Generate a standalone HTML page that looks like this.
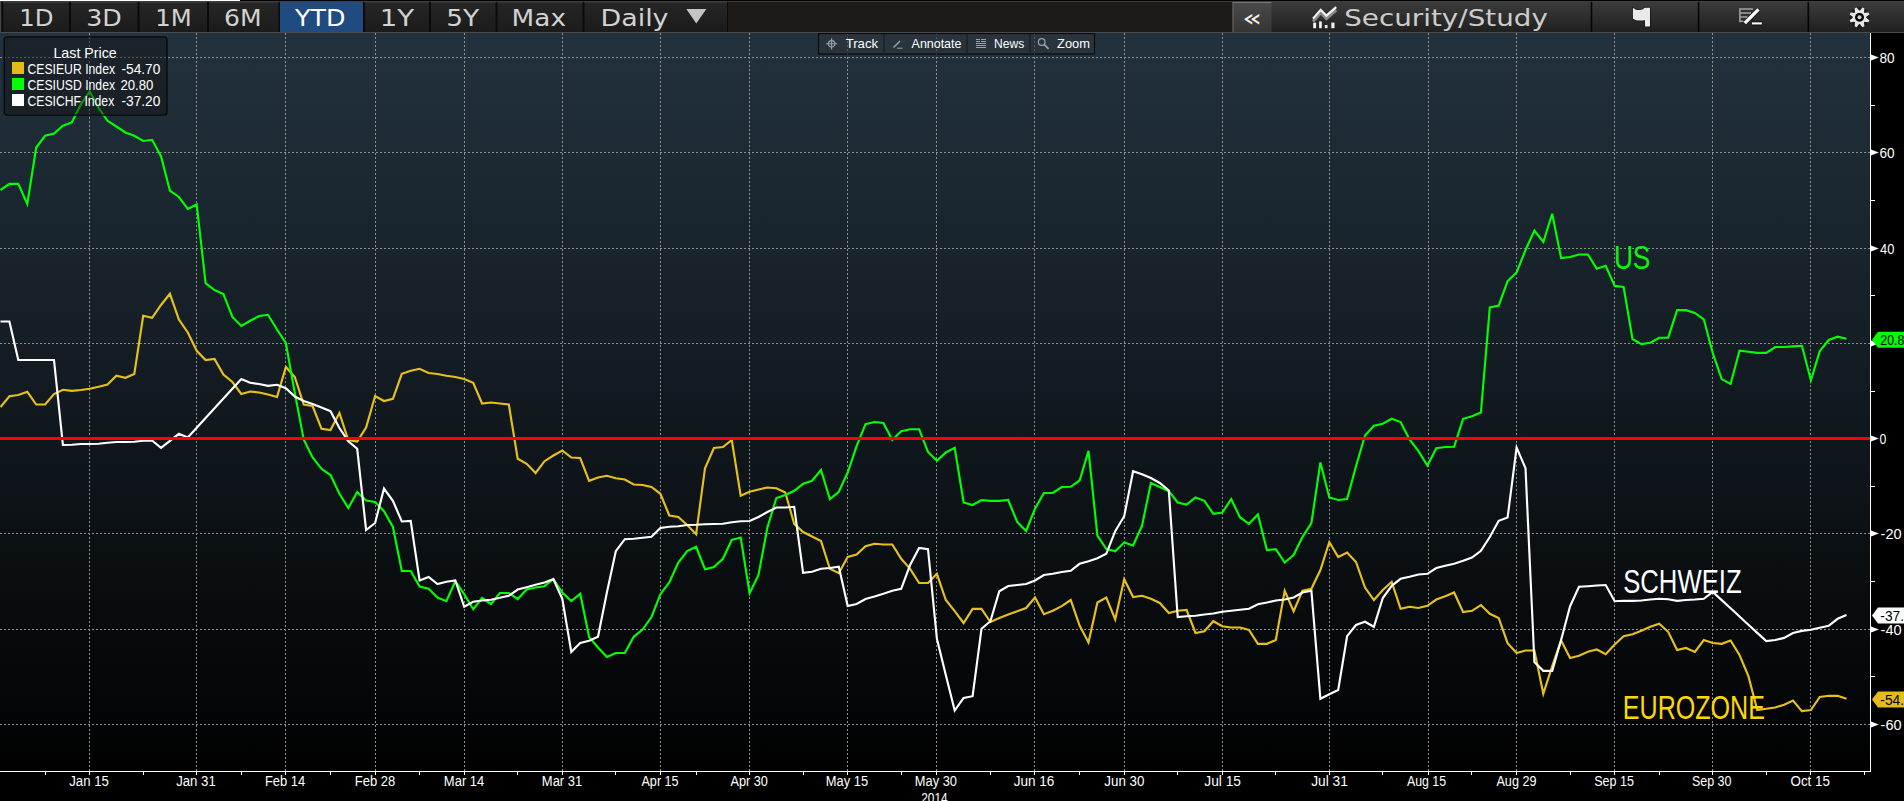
<!DOCTYPE html>
<html lang="en"><head><meta charset="utf-8"><title>CESI Chart</title>
<style>
html,body{margin:0;padding:0;background:#000;overflow:hidden}
svg{display:block;font-family:"Liberation Sans",sans-serif}
.g{stroke:#8e8e8e;stroke-width:1;stroke-dasharray:2 2;shape-rendering:crispEdges;fill:none}
.ax{stroke:#fff;stroke-width:1;shape-rendering:crispEdges;fill:none}
.ln{fill:none;stroke-width:2.15;stroke-linejoin:miter;stroke-linecap:butt}
</style></head><body>
<svg width="1904" height="801" viewBox="0 0 1904 801">
<defs>
<linearGradient id="bg" x1="0" y1="0" x2="0" y2="1"><stop offset="0" stop-color="#22323e"/><stop offset="1" stop-color="#010101"/></linearGradient>
<linearGradient id="tb" x1="0" y1="0" x2="0" y2="1"><stop offset="0" stop-color="#262626"/><stop offset="1" stop-color="#1b1b1b"/></linearGradient>
<linearGradient id="tr" x1="0" y1="0" x2="0" y2="1"><stop offset="0" stop-color="#3b3b3b"/><stop offset="1" stop-color="#202020"/></linearGradient>
<linearGradient id="tc" x1="0" y1="0" x2="0" y2="1"><stop offset="0" stop-color="#4a4a4a"/><stop offset="1" stop-color="#353535"/></linearGradient>
</defs>
<rect width="1904" height="801" fill="#000"/>

<rect x="0" y="33" width="1870" height="738" fill="url(#bg)"/>
<line class="g" x1="89.5" y1="33" x2="89.5" y2="771"/>
<line class="g" x1="196.5" y1="33" x2="196.5" y2="771"/>
<line class="g" x1="285.5" y1="33" x2="285.5" y2="771"/>
<line class="g" x1="375.5" y1="33" x2="375.5" y2="771"/>
<line class="g" x1="464.5" y1="33" x2="464.5" y2="771"/>
<line class="g" x1="562.5" y1="33" x2="562.5" y2="771"/>
<line class="g" x1="660.5" y1="33" x2="660.5" y2="771"/>
<line class="g" x1="749.5" y1="33" x2="749.5" y2="771"/>
<line class="g" x1="847.5" y1="33" x2="847.5" y2="771"/>
<line class="g" x1="936.5" y1="33" x2="936.5" y2="771"/>
<line class="g" x1="1034.5" y1="33" x2="1034.5" y2="771"/>
<line class="g" x1="1124.5" y1="33" x2="1124.5" y2="771"/>
<line class="g" x1="1222.5" y1="33" x2="1222.5" y2="771"/>
<line class="g" x1="1329.5" y1="33" x2="1329.5" y2="771"/>
<line class="g" x1="1428.5" y1="33" x2="1428.5" y2="771"/>
<line class="g" x1="1516.5" y1="33" x2="1516.5" y2="771"/>
<line class="g" x1="1614.5" y1="33" x2="1614.5" y2="771"/>
<line class="g" x1="1712.5" y1="33" x2="1712.5" y2="771"/>
<line class="g" x1="1810.5" y1="33" x2="1810.5" y2="771"/>
<line class="g" x1="0" y1="57.5" x2="1870" y2="57.5"/>
<line class="g" x1="0" y1="152.5" x2="1870" y2="152.5"/>
<line class="g" x1="0" y1="248.5" x2="1870" y2="248.5"/>
<line class="g" x1="0" y1="343.5" x2="1870" y2="343.5"/>
<line class="g" x1="0" y1="533.5" x2="1870" y2="533.5"/>
<line class="g" x1="0" y1="629.5" x2="1870" y2="629.5"/>
<line class="g" x1="0" y1="724.5" x2="1870" y2="724.5"/>
<polyline class="ln" stroke="#e8c118" points="0.5,407.0 9.4,396.2 18.3,395.0 27.3,391.8 36.2,404.5 45.1,404.5 54.0,394.0 62.9,389.8 71.8,390.8 80.8,390.0 89.7,388.8 98.6,386.8 107.5,384.5 116.4,375.8 125.4,377.8 134.3,374.0 143.2,315.8 152.1,317.8 161.0,305.0 169.9,293.8 178.9,319.5 187.8,332.5 196.7,350.8 205.6,360.0 214.5,359.0 223.4,374.5 232.4,382.0 241.3,394.0 250.2,391.5 259.1,392.5 268.0,394.5 277.0,397.0 285.9,367.0 294.8,377.0 303.7,404.5 312.6,406.0 321.5,428.8 330.5,430.0 339.4,413.0 348.3,440.0 357.2,441.5 366.1,427.5 375.1,396.0 384.0,401.0 392.9,398.8 401.8,373.8 410.7,370.8 419.6,368.8 428.6,373.0 437.5,374.0 446.4,375.8 455.3,377.0 464.2,379.0 473.2,382.8 482.1,403.5 491.0,402.5 499.9,403.5 508.8,404.5 517.7,458.8 526.7,463.8 535.6,473.0 544.5,461.2 553.4,455.5 562.3,450.5 571.3,457.5 580.2,458.0 589.1,480.8 598.0,477.5 606.9,475.8 615.8,478.2 624.8,479.5 633.7,484.5 642.6,485.0 651.5,487.0 660.4,493.8 669.3,515.5 678.3,517.0 687.2,525.0 696.1,534.2 705.0,468.2 713.9,448.0 722.9,447.0 731.8,440.0 740.7,495.8 749.6,491.8 758.5,489.5 767.4,487.5 776.4,488.2 785.3,492.5 794.2,523.8 803.1,532.0 812.0,536.5 821.0,541.0 829.9,568.8 838.8,573.2 847.7,557.0 856.6,554.5 865.5,546.2 874.5,543.8 883.4,544.5 892.3,544.5 901.2,558.8 910.1,568.8 919.1,583.0 928.0,583.0 936.9,573.8 945.8,600.0 954.7,611.2 963.6,623.0 972.6,608.8 981.5,608.8 990.4,622.0 999.3,618.0 1008.2,614.5 1017.2,611.2 1026.1,608.0 1035.0,597.5 1043.9,614.2 1052.8,610.8 1061.7,606.2 1070.7,600.0 1079.6,625.5 1088.5,642.5 1097.4,602.5 1106.3,597.5 1115.2,619.5 1124.2,579.2 1133.1,597.0 1142.0,595.8 1150.9,598.8 1159.8,603.0 1168.8,613.0 1177.7,610.8 1186.6,610.0 1195.5,633.0 1204.4,631.2 1213.3,621.2 1222.3,626.2 1231.2,627.5 1240.1,627.5 1249.0,630.0 1257.9,643.8 1266.9,643.8 1275.8,640.0 1284.7,590.8 1293.6,611.2 1302.5,590.8 1311.4,588.8 1320.4,570.0 1329.3,542.0 1338.2,557.0 1347.1,552.5 1356.0,562.0 1365.0,587.5 1373.9,600.0 1382.8,590.0 1391.7,582.0 1400.6,608.8 1409.5,606.8 1418.5,608.0 1427.4,605.8 1436.3,599.5 1445.2,596.2 1454.1,592.5 1463.1,612.0 1472.0,610.8 1480.9,605.0 1489.8,613.8 1498.7,618.0 1507.6,643.2 1516.6,653.0 1525.5,650.5 1534.4,650.5 1543.3,693.8 1552.2,666.2 1561.1,640.5 1570.1,658.0 1579.0,655.8 1587.9,651.8 1596.8,649.5 1605.7,654.2 1614.7,644.5 1623.6,636.2 1632.5,634.2 1641.4,630.8 1650.3,626.8 1659.2,623.8 1668.2,631.8 1677.1,650.0 1686.0,648.0 1694.9,652.0 1703.8,640.0 1712.8,643.0 1721.7,643.8 1730.6,640.5 1739.5,655.0 1748.4,676.2 1757.3,710.0 1766.3,708.8 1775.2,707.5 1784.1,704.7 1793.0,700.5 1801.9,711.1 1810.9,710.0 1819.8,696.9 1828.7,695.8 1837.6,695.8 1846.5,698.8"/>
<polyline class="ln" stroke="#00ff00" points="0.5,190.0 9.4,183.8 18.3,183.8 27.3,204.0 36.2,147.5 45.1,135.8 54.0,133.5 62.9,125.8 71.8,122.5 80.8,104.5 89.7,91.5 98.6,108.0 107.5,120.8 116.4,126.5 125.4,132.5 134.3,135.8 143.2,141.0 152.1,139.8 161.0,156.2 169.9,190.5 178.9,197.0 187.8,209.0 196.7,204.5 205.6,283.2 214.5,290.0 223.4,294.0 232.4,317.0 241.3,326.0 250.2,320.8 259.1,316.0 268.0,314.8 277.0,329.5 285.9,343.2 294.8,393.0 303.7,439.5 312.6,457.5 321.5,468.8 330.5,475.0 339.4,493.8 348.3,508.0 357.2,492.0 366.1,500.5 375.1,502.0 384.0,511.2 392.9,527.0 401.8,571.0 410.7,571.0 419.6,586.5 428.6,588.8 437.5,597.5 446.4,601.2 455.3,581.2 464.2,594.2 473.2,609.2 482.1,598.0 491.0,604.0 499.9,593.0 508.8,593.0 517.7,599.0 526.7,589.5 535.6,587.5 544.5,586.2 553.4,579.0 562.3,592.5 571.3,601.0 580.2,593.8 589.1,637.0 598.0,647.5 606.9,657.0 615.8,653.0 624.8,653.0 633.7,636.8 642.6,629.5 651.5,617.0 660.4,594.2 669.3,582.5 678.3,562.5 687.2,551.0 696.1,546.8 705.0,569.2 713.9,567.0 722.9,558.8 731.8,540.0 740.7,537.5 749.6,593.2 758.5,575.0 767.4,527.5 776.4,498.0 785.3,495.0 794.2,490.8 803.1,483.8 812.0,480.8 821.0,470.0 829.9,499.2 838.8,491.8 847.7,472.5 856.6,446.2 865.5,424.2 874.5,422.0 883.4,423.0 892.3,440.0 901.2,431.2 910.1,429.2 919.1,429.2 928.0,452.0 936.9,460.8 945.8,452.5 954.7,447.8 963.6,502.5 972.6,505.0 981.5,500.0 990.4,500.8 999.3,500.8 1008.2,500.0 1017.2,522.0 1026.1,531.0 1035.0,508.8 1043.9,493.0 1052.8,493.0 1061.7,487.0 1070.7,486.8 1079.6,480.5 1088.5,450.8 1097.4,535.5 1106.3,548.8 1115.2,551.2 1124.2,542.5 1133.1,545.5 1142.0,525.8 1150.9,483.0 1159.8,487.0 1168.8,491.2 1177.7,502.5 1186.6,504.5 1195.5,497.5 1204.4,500.8 1213.3,513.8 1222.3,512.5 1231.2,499.2 1240.1,517.5 1249.0,523.8 1257.9,514.5 1266.9,550.0 1275.8,549.2 1284.7,562.5 1293.6,555.0 1302.5,537.0 1311.4,523.0 1320.4,462.5 1329.3,497.5 1338.2,500.0 1347.1,499.0 1356.0,466.2 1365.0,435.5 1373.9,425.8 1382.8,423.8 1391.7,418.8 1400.6,422.0 1409.5,439.5 1418.5,451.2 1427.4,465.5 1436.3,448.2 1445.2,447.0 1454.1,446.8 1463.1,418.8 1472.0,416.2 1480.9,412.5 1489.8,307.5 1498.7,305.5 1507.6,281.2 1516.6,272.5 1525.5,250.0 1534.4,230.5 1543.3,242.0 1552.2,213.8 1561.1,258.0 1570.1,257.0 1579.0,254.5 1587.9,254.5 1596.8,268.8 1605.7,265.8 1614.7,285.9 1623.6,287.0 1632.5,339.0 1641.4,344.1 1650.3,342.8 1659.2,337.7 1668.2,337.7 1677.1,310.1 1686.0,310.1 1694.9,312.9 1703.8,319.3 1712.8,353.2 1721.7,379.1 1730.6,384.0 1739.5,350.7 1748.4,351.7 1757.3,352.8 1766.3,352.8 1775.2,347.0 1784.1,347.0 1793.0,346.4 1801.9,345.8 1810.9,380.4 1819.8,351.1 1828.7,340.0 1837.6,336.7 1846.5,338.8"/>
<polyline class="ln" stroke="#ffffff" points="0.5,321.5 9.4,321.5 18.3,360.0 27.3,360.0 36.2,360.0 45.1,360.0 54.0,360.0 62.9,445.0 71.8,444.8 80.8,444.0 89.7,444.0 98.6,443.8 107.5,442.8 116.4,442.0 125.4,442.0 134.3,441.8 143.2,440.8 152.1,440.5 161.0,447.8 169.9,440.8 178.9,433.8 187.8,437.5 196.7,427.8 205.6,418.0 214.5,408.2 223.4,398.5 232.4,388.8 241.3,379.0 250.2,382.8 259.1,384.0 268.0,385.8 277.0,384.8 285.9,388.2 294.8,396.5 303.7,401.0 312.6,404.0 321.5,407.5 330.5,411.2 339.4,428.0 348.3,441.2 357.2,448.8 366.1,530.0 375.1,523.0 384.0,488.5 392.9,500.8 401.8,521.5 410.7,521.0 419.6,580.5 428.6,577.0 437.5,584.0 446.4,581.8 455.3,580.5 464.2,606.8 473.2,601.8 482.1,600.5 491.0,599.8 499.9,597.8 508.8,595.8 517.7,589.5 526.7,587.2 535.6,584.8 544.5,582.5 553.4,579.2 562.3,598.8 571.3,652.0 580.2,643.0 589.1,640.8 598.0,636.8 606.9,592.5 615.8,551.2 624.8,539.2 633.7,538.8 642.6,537.8 651.5,536.8 660.4,528.0 669.3,526.8 678.3,526.2 687.2,525.0 696.1,524.8 705.0,524.2 713.9,524.0 722.9,523.8 731.8,522.2 740.7,521.2 749.6,521.0 758.5,517.0 767.4,512.0 776.4,507.5 785.3,507.5 794.2,506.8 803.1,572.8 812.0,571.8 821.0,568.8 829.9,568.0 838.8,566.8 847.7,606.0 856.6,604.0 865.5,599.0 874.5,596.5 883.4,593.8 892.3,590.8 901.2,588.8 910.1,565.0 919.1,548.0 928.0,549.2 936.9,638.8 945.8,675.0 954.7,710.5 963.6,698.0 972.6,696.2 981.5,628.8 990.4,621.2 999.3,591.2 1008.2,586.0 1017.2,585.0 1026.1,584.0 1035.0,580.5 1043.9,575.0 1052.8,573.8 1061.7,572.0 1070.7,570.8 1079.6,563.8 1088.5,561.2 1097.4,558.2 1106.3,553.8 1115.2,531.2 1124.2,516.2 1133.1,471.2 1142.0,474.2 1150.9,478.0 1159.8,483.0 1168.8,490.5 1177.7,617.0 1186.6,616.2 1195.5,615.8 1204.4,614.5 1213.3,613.5 1222.3,611.8 1231.2,610.8 1240.1,609.8 1249.0,608.8 1257.9,604.2 1266.9,602.5 1275.8,600.5 1284.7,599.5 1293.6,597.5 1302.5,592.5 1311.4,590.8 1320.4,698.8 1329.3,694.2 1338.2,690.0 1347.1,636.2 1356.0,625.0 1365.0,621.8 1373.9,626.8 1382.8,598.0 1391.7,585.8 1400.6,578.8 1409.5,576.8 1418.5,574.5 1427.4,573.8 1436.3,568.0 1445.2,565.8 1454.1,563.8 1463.1,560.8 1472.0,557.5 1480.9,550.8 1489.8,537.0 1498.7,520.8 1507.6,517.5 1516.6,447.5 1525.5,468.2 1534.4,662.0 1543.3,670.8 1552.2,670.8 1561.1,640.0 1570.1,606.2 1579.0,586.8 1587.9,586.2 1596.8,585.5 1605.7,585.0 1614.7,601.2 1623.6,600.8 1632.5,600.8 1641.4,600.5 1650.3,599.5 1659.2,598.8 1668.2,599.2 1677.1,600.8 1686.0,600.0 1694.9,599.5 1703.8,598.8 1712.8,591.9 1721.7,600.1 1730.6,608.3 1739.5,616.5 1748.4,624.7 1757.3,632.9 1766.3,641.1 1775.2,640.0 1784.1,637.9 1793.0,633.0 1801.9,630.9 1810.9,629.8 1819.8,627.7 1828.7,625.8 1837.6,618.8 1846.5,615.0"/>
<rect x="0" y="437" width="1870" height="3" fill="#ff0000"/>
<text x="1613.9" y="268.7" font-size="32.5" fill="#08f808" textLength="36.48" lengthAdjust="spacingAndGlyphs">US</text>
<text x="1623.18" y="592.5" font-size="32.5" fill="#ffffff" textLength="118.41" lengthAdjust="spacingAndGlyphs">SCHWEIZ</text>
<text x="1622.87" y="718.7" font-size="32.5" fill="#ffd700" textLength="142.06" lengthAdjust="spacingAndGlyphs">EUROZONE</text>
<line class="ax" x1="0" y1="771.5" x2="1871" y2="771.5"/>
<line class="ax" x1="1870.5" y1="33" x2="1870.5" y2="772"/>
<line class="ax" x1="89.5" y1="771" x2="89.5" y2="775"/>
<line class="ax" x1="196.5" y1="771" x2="196.5" y2="775"/>
<line class="ax" x1="285.5" y1="771" x2="285.5" y2="775"/>
<line class="ax" x1="375.5" y1="771" x2="375.5" y2="775"/>
<line class="ax" x1="464.5" y1="771" x2="464.5" y2="775"/>
<line class="ax" x1="562.5" y1="771" x2="562.5" y2="775"/>
<line class="ax" x1="660.5" y1="771" x2="660.5" y2="775"/>
<line class="ax" x1="749.5" y1="771" x2="749.5" y2="775"/>
<line class="ax" x1="847.5" y1="771" x2="847.5" y2="775"/>
<line class="ax" x1="936.5" y1="771" x2="936.5" y2="775"/>
<line class="ax" x1="1034.5" y1="771" x2="1034.5" y2="775"/>
<line class="ax" x1="1124.5" y1="771" x2="1124.5" y2="775"/>
<line class="ax" x1="1222.5" y1="771" x2="1222.5" y2="775"/>
<line class="ax" x1="1329.5" y1="771" x2="1329.5" y2="775"/>
<line class="ax" x1="1428.5" y1="771" x2="1428.5" y2="775"/>
<line class="ax" x1="1516.5" y1="771" x2="1516.5" y2="775"/>
<line class="ax" x1="1614.5" y1="771" x2="1614.5" y2="775"/>
<line class="ax" x1="1712.5" y1="771" x2="1712.5" y2="775"/>
<line class="ax" x1="1810.5" y1="771" x2="1810.5" y2="775"/>
<line class="ax" x1="45.5" y1="771" x2="45.5" y2="775"/>
<line class="ax" x1="143.5" y1="771" x2="143.5" y2="775"/>
<line class="ax" x1="241.5" y1="771" x2="241.5" y2="775"/>
<line class="ax" x1="330.5" y1="771" x2="330.5" y2="775"/>
<line class="ax" x1="419.5" y1="771" x2="419.5" y2="775"/>
<line class="ax" x1="517.5" y1="771" x2="517.5" y2="775"/>
<line class="ax" x1="615.5" y1="771" x2="615.5" y2="775"/>
<line class="ax" x1="696.5" y1="771" x2="696.5" y2="775"/>
<line class="ax" x1="803.5" y1="771" x2="803.5" y2="775"/>
<line class="ax" x1="901.5" y1="771" x2="901.5" y2="775"/>
<line class="ax" x1="990.5" y1="771" x2="990.5" y2="775"/>
<line class="ax" x1="1079.5" y1="771" x2="1079.5" y2="775"/>
<line class="ax" x1="1177.5" y1="771" x2="1177.5" y2="775"/>
<line class="ax" x1="1275.5" y1="771" x2="1275.5" y2="775"/>
<line class="ax" x1="1382.5" y1="771" x2="1382.5" y2="775"/>
<line class="ax" x1="1471.5" y1="771" x2="1471.5" y2="775"/>
<line class="ax" x1="1570.5" y1="771" x2="1570.5" y2="775"/>
<line class="ax" x1="1659.5" y1="771" x2="1659.5" y2="775"/>
<line class="ax" x1="1766.5" y1="771" x2="1766.5" y2="775"/>
<line class="ax" x1="1864.5" y1="771" x2="1864.5" y2="775"/>
<text x="69.2" y="786.3" font-size="14" fill="#fff" textLength="39.72" lengthAdjust="spacingAndGlyphs">Jan 15</text>
<text x="176.21" y="786.3" font-size="14" fill="#fff" textLength="39.57" lengthAdjust="spacingAndGlyphs">Jan 31</text>
<text x="264.92" y="786.3" font-size="14" fill="#fff" textLength="40.33" lengthAdjust="spacingAndGlyphs">Feb 14</text>
<text x="354.79" y="786.3" font-size="14" fill="#fff" textLength="40.59" lengthAdjust="spacingAndGlyphs">Feb 28</text>
<text x="443.86" y="786.3" font-size="14" fill="#fff" textLength="40.4" lengthAdjust="spacingAndGlyphs">Mar 14</text>
<text x="541.83" y="786.3" font-size="14" fill="#fff" textLength="40.37" lengthAdjust="spacingAndGlyphs">Mar 31</text>
<text x="641.48" y="786.3" font-size="14" fill="#fff" textLength="37.11" lengthAdjust="spacingAndGlyphs">Apr 15</text>
<text x="730.48" y="786.3" font-size="14" fill="#fff" textLength="37.41" lengthAdjust="spacingAndGlyphs">Apr 30</text>
<text x="825.83" y="786.3" font-size="14" fill="#fff" textLength="42.22" lengthAdjust="spacingAndGlyphs">May 15</text>
<text x="914.83" y="786.3" font-size="14" fill="#fff" textLength="42.12" lengthAdjust="spacingAndGlyphs">May 30</text>
<text x="1013.65" y="786.3" font-size="14" fill="#fff" textLength="40.73" lengthAdjust="spacingAndGlyphs">Jun 16</text>
<text x="1104.31" y="786.3" font-size="14" fill="#fff" textLength="40.12" lengthAdjust="spacingAndGlyphs">Jun 30</text>
<text x="1204.34" y="786.3" font-size="14" fill="#fff" textLength="36.68" lengthAdjust="spacingAndGlyphs">Jul 15</text>
<text x="1311.17" y="786.3" font-size="14" fill="#fff" textLength="36.79" lengthAdjust="spacingAndGlyphs">Jul 31</text>
<text x="1406.95" y="786.3" font-size="14" fill="#fff" textLength="39.1" lengthAdjust="spacingAndGlyphs">Aug 15</text>
<text x="1496.45" y="786.3" font-size="14" fill="#fff" textLength="40.02" lengthAdjust="spacingAndGlyphs">Aug 29</text>
<text x="1594.24" y="786.3" font-size="14" fill="#fff" textLength="39.59" lengthAdjust="spacingAndGlyphs">Sep 15</text>
<text x="1691.96" y="786.3" font-size="14" fill="#fff" textLength="39.55" lengthAdjust="spacingAndGlyphs">Sep 30</text>
<text x="1790.52" y="786.3" font-size="14" fill="#fff" textLength="39.41" lengthAdjust="spacingAndGlyphs">Oct 15</text>
<text x="934.5" y="802.6" font-size="14" fill="#fff" text-anchor="middle" textLength="26.5" lengthAdjust="spacingAndGlyphs">2014</text>
<path d="M1871 54.6L1878.8 57.5L1871 60.4Z" fill="#fff"/>
<text x="1879.38" y="62.5" font-size="14" fill="#fff" textLength="15.13" lengthAdjust="spacingAndGlyphs">80</text>
<path d="M1871 149.6L1878.8 152.5L1871 155.4Z" fill="#fff"/>
<text x="1879.52" y="157.5" font-size="14" fill="#fff" textLength="15.09" lengthAdjust="spacingAndGlyphs">60</text>
<path d="M1871 245.6L1878.8 248.5L1871 251.4Z" fill="#fff"/>
<text x="1880.08" y="253.5" font-size="14" fill="#fff" textLength="14.34" lengthAdjust="spacingAndGlyphs">40</text>
<path d="M1871 340.6L1878.8 343.5L1871 346.4Z" fill="#fff"/>
<path d="M1871 435.6L1878.8 438.5L1871 441.4Z" fill="#fff"/>
<text x="1879.41" y="443.5" font-size="14" fill="#fff" textLength="6.85" lengthAdjust="spacingAndGlyphs">0</text>
<path d="M1871 530.6L1878.8 533.5L1871 536.4Z" fill="#fff"/>
<text x="1880.59" y="538.5" font-size="14" fill="#fff" textLength="21.03" lengthAdjust="spacingAndGlyphs">-20</text>
<path d="M1871 626.6L1878.8 629.5L1871 632.4Z" fill="#fff"/>
<text x="1880.59" y="634.5" font-size="14" fill="#fff" textLength="21.03" lengthAdjust="spacingAndGlyphs">-40</text>
<path d="M1871 721.6L1878.8 724.5L1871 727.4Z" fill="#fff"/>
<text x="1880.59" y="729.5" font-size="14" fill="#fff" textLength="21.03" lengthAdjust="spacingAndGlyphs">-60</text>
<line class="ax" x1="1871" y1="105.5" x2="1874.5" y2="105.5"/>
<line class="ax" x1="1871" y1="200.5" x2="1874.5" y2="200.5"/>
<line class="ax" x1="1871" y1="295.5" x2="1874.5" y2="295.5"/>
<line class="ax" x1="1871" y1="391.5" x2="1874.5" y2="391.5"/>
<line class="ax" x1="1871" y1="486.5" x2="1874.5" y2="486.5"/>
<line class="ax" x1="1871" y1="581.5" x2="1874.5" y2="581.5"/>
<line class="ax" x1="1871" y1="676.5" x2="1874.5" y2="676.5"/>
<path d="M1872 339.7L1878 331.7H1904V347.7H1878Z" fill="#00ff00"/>
<text x="1880.3" y="344.7" font-size="14" fill="#000" textLength="31" lengthAdjust="spacingAndGlyphs">20.80</text>
<path d="M1872 615.6L1878 607.6H1904V623.6H1878Z" fill="#ffffff"/>
<text x="1880.3" y="620.6" font-size="14" fill="#000" textLength="39" lengthAdjust="spacingAndGlyphs">-37.20</text>
<path d="M1872 699.6L1878 691.6H1904V707.6H1878Z" fill="#e4bb18"/>
<text x="1880.3" y="704.6" font-size="14" fill="#000" textLength="39" lengthAdjust="spacingAndGlyphs">-54.70</text>
<rect x="4.2" y="36.8" width="162.8" height="78.3" rx="3" fill="#141414" fill-opacity="0.46" stroke="#06080a" stroke-width="1.3"/>
<text x="53.44" y="57.8" font-size="14.2" fill="#fff" textLength="63.3" lengthAdjust="spacingAndGlyphs">Last Price</text>
<rect x="12" y="62" width="12" height="12" fill="#e4bb18"/>
<text x="27.47" y="73.7" font-size="14.2" fill="#fff" textLength="87.57" lengthAdjust="spacingAndGlyphs">CESIEUR Index</text>
<text x="121.53" y="73.7" font-size="14.2" fill="#fff" textLength="38.83" lengthAdjust="spacingAndGlyphs">-54.70</text>
<rect x="12" y="78" width="12" height="12" fill="#00ff00"/>
<text x="27.47" y="89.7" font-size="14.2" fill="#fff" textLength="87.57" lengthAdjust="spacingAndGlyphs">CESIUSD Index</text>
<text x="120.47" y="89.7" font-size="14.2" fill="#fff" textLength="32.94" lengthAdjust="spacingAndGlyphs">20.80</text>
<rect x="12" y="94" width="12" height="12" fill="#ffffff"/>
<text x="27.47" y="105.7" font-size="14.2" fill="#fff" textLength="86.78" lengthAdjust="spacingAndGlyphs">CESICHF Index</text>
<text x="121.55" y="105.7" font-size="14.2" fill="#fff" textLength="38.77" lengthAdjust="spacingAndGlyphs">-37.20</text>
<rect x="818.5" y="33.5" width="276" height="20.5" fill="#2f363d" fill-opacity="0.62" stroke="#080b0e" stroke-width="1.2"/>
<line x1="884" y1="34" x2="884" y2="54" stroke="#1a2229" stroke-width="1.5"/>
<line x1="967" y1="34" x2="967" y2="54" stroke="#1a2229" stroke-width="1.5"/>
<line x1="1030" y1="34" x2="1030" y2="54" stroke="#1a2229" stroke-width="1.5"/>
<text x="845.63" y="48.3" font-size="13.6" fill="#fff" textLength="32.45" lengthAdjust="spacingAndGlyphs">Track</text>
<text x="911.62" y="48.3" font-size="13.6" fill="#fff" textLength="49.78" lengthAdjust="spacingAndGlyphs">Annotate</text>
<text x="994.03" y="48.3" font-size="13.6" fill="#fff" textLength="30.15" lengthAdjust="spacingAndGlyphs">News</text>
<text x="1057.11" y="48.3" font-size="13.6" fill="#fff" textLength="32.85" lengthAdjust="spacingAndGlyphs">Zoom</text>
<g stroke="#9aa3aa" stroke-width="1.1" fill="none"><circle cx="831.6" cy="43.8" r="3.2"/><path d="M831.6 38.2v11.2M826 43.8h11.2"/></g>
<g stroke="#9aa3aa" stroke-width="1.4" fill="none"><path d="M893.5 47.5L900 41"/><path d="M897 48.2h5.5" stroke-width="1"/></g>
<g stroke="#9aa3aa" stroke-width="1" fill="none" shape-rendering="crispEdges"><path d="M976 39.5h4M981 39.5h4.5M976 41.5h4M981 41.5h4.5M976 43.5h9.5M976 45.5h9.5M976 47.5h9.5"/></g>
<g stroke="#9aa3aa" stroke-width="1.2" fill="none"><circle cx="1041.7" cy="42" r="3.3"/><path d="M1044.3 44.6L1048.6 48.8" stroke-width="1.8"/></g>
<rect x="0" y="0" width="1904" height="33" fill="#0a0a0a"/>
<rect x="728" y="2" width="505" height="30" fill="#1d1a17"/>
<rect x="0" y="32" width="1904" height="1" fill="#4b4b4b"/>
<rect x="3.2" y="2" width="65.8" height="30" fill="url(#tb)"/>
<rect x="3.2" y="2" width="65.8" height="1" fill="#333"/>
<text x="19.16" y="26" font-size="23.2" fill="#d2d2d2" font-family="DejaVu Sans, sans-serif" textLength="34.31" lengthAdjust="spacingAndGlyphs">1D</text>
<rect x="71" y="2" width="66.5" height="30" fill="url(#tb)"/>
<rect x="71" y="2" width="66.5" height="1" fill="#333"/>
<text x="86.2" y="26" font-size="23.2" fill="#d2d2d2" font-family="DejaVu Sans, sans-serif" textLength="35.61" lengthAdjust="spacingAndGlyphs">3D</text>
<rect x="139.5" y="2" width="67.5" height="30" fill="url(#tb)"/>
<rect x="139.5" y="2" width="67.5" height="1" fill="#333"/>
<text x="155.23" y="26" font-size="23.2" fill="#d2d2d2" font-family="DejaVu Sans, sans-serif" textLength="36.47" lengthAdjust="spacingAndGlyphs">1M</text>
<rect x="209" y="2" width="69.5" height="30" fill="url(#tb)"/>
<rect x="209" y="2" width="69.5" height="1" fill="#333"/>
<text x="224.07" y="26" font-size="23.2" fill="#d2d2d2" font-family="DejaVu Sans, sans-serif" textLength="37.56" lengthAdjust="spacingAndGlyphs">6M</text>
<rect x="280" y="2" width="83" height="30" fill="#1f4b80"/>
<text x="295.04" y="26" font-size="23.2" fill="#fff" font-family="DejaVu Sans, sans-serif" textLength="50.46" lengthAdjust="spacingAndGlyphs">YTD</text>
<rect x="365" y="2" width="64" height="30" fill="url(#tb)"/>
<rect x="365" y="2" width="64" height="1" fill="#333"/>
<text x="379.69" y="26" font-size="23.2" fill="#d2d2d2" font-family="DejaVu Sans, sans-serif" textLength="34.45" lengthAdjust="spacingAndGlyphs">1Y</text>
<rect x="431" y="2" width="64.5" height="30" fill="url(#tb)"/>
<rect x="431" y="2" width="64.5" height="1" fill="#333"/>
<text x="446.26" y="26" font-size="23.2" fill="#d2d2d2" font-family="DejaVu Sans, sans-serif" textLength="32.96" lengthAdjust="spacingAndGlyphs">5Y</text>
<rect x="497.5" y="2" width="85.0" height="30" fill="url(#tb)"/>
<rect x="497.5" y="2" width="85.0" height="1" fill="#333"/>
<text x="511.58" y="26" font-size="23.2" fill="#d2d2d2" font-family="DejaVu Sans, sans-serif" textLength="54.38" lengthAdjust="spacingAndGlyphs">Max</text>
<rect x="584.5" y="2" width="142.5" height="30" fill="url(#tb)"/>
<rect x="584.5" y="2" width="142.5" height="1" fill="#333"/>
<text x="600.41" y="26" font-size="23.2" fill="#d2d2d2" font-family="DejaVu Sans, sans-serif" textLength="68.15" lengthAdjust="spacingAndGlyphs">Daily</text>
<path d="M686.3 9H706.3L696.3 23.6Z" fill="#c4c4c4"/>
<rect x="1233" y="2" width="671" height="30" fill="url(#tr)"/>
<rect x="1232.5" y="2" width="39" height="30" fill="url(#tc)"/><rect x="1232.5" y="2" width="39" height="1" fill="#777"/><rect x="1232.5" y="2" width="1" height="30" fill="#666"/>
<rect x="1590.7" y="2" width="1.6" height="30" fill="#050505"/>
<rect x="1697.8" y="2" width="1.6" height="30" fill="#050505"/>
<rect x="1807.5" y="2" width="1.6" height="30" fill="#050505"/>
<text x="1241.92" y="25.8" font-size="23.3" fill="#f0f0f0" font-family="DejaVu Sans, sans-serif" textLength="20.34" lengthAdjust="spacingAndGlyphs">«</text>
<text x="1344.19" y="26" font-size="22.6" fill="#cccccc" font-family="DejaVu Sans, sans-serif" textLength="203.68" lengthAdjust="spacingAndGlyphs">Security/Study</text>
<g fill="#f2f2f2"><rect x="1313.2" y="22.6" width="2.9" height="5.6"/><rect x="1319.1" y="21.4" width="2.7" height="6.8"/><rect x="1324.8" y="25" width="2.7" height="3.2"/><rect x="1331.3" y="22.6" width="3.2" height="5.6"/></g>
<path d="M1313 21.6L1320.7 12.8L1326.4 18.7L1336.2 10.2" fill="none" stroke="#8a8a8a" stroke-width="3"/>
<path d="M1313 18.6L1320.7 9.8L1326.4 15.7L1336.2 7.2" fill="none" stroke="#f4f4f4" stroke-width="2.2" stroke-linejoin="miter"/>
<path d="M1632.9 7.8L1636 9.8Q1639.5 10.4 1642.5 9.6L1644.6 7.8H1650V26.6H1645V20.2Q1640 20.7 1636 20.3L1632.9 18.7Z" fill="#e9e9e9" stroke="#0c0c0c" stroke-opacity="0.75" stroke-width="1.6" paint-order="stroke"/>
<g fill="none"><path d="M1752 23.4h10.6M1744.8 23.4L1758.6 9.4" stroke="#0c0c0c" stroke-opacity="0.55" stroke-width="5"/><path d="M1739.9 22.2V8.9H1753M1739.9 13H1751M1739.9 17.1H1747.5M1739.9 21.2H1743.5" stroke="#a4a4a4" stroke-width="1.5"/><path d="M1744.8 23.1L1758.5 9.4" stroke="#fff" stroke-width="3.4"/><path d="M1752 23.4h9.8" stroke="#fff" stroke-width="2.1"/></g>
<circle cx="1859.5" cy="17.3" r="10.4" fill="#0c0c0c" fill-opacity="0.55"/>
<path d="M1857.1 11.700000000000001L1858.4 7.100000000000001H1860.6L1861.9 11.700000000000001Z" transform="rotate(22.5 1859.5 17.3)" fill="#e6e6e6"/><path d="M1857.1 11.700000000000001L1858.4 7.100000000000001H1860.6L1861.9 11.700000000000001Z" transform="rotate(67.5 1859.5 17.3)" fill="#e6e6e6"/><path d="M1857.1 11.700000000000001L1858.4 7.100000000000001H1860.6L1861.9 11.700000000000001Z" transform="rotate(112.5 1859.5 17.3)" fill="#e6e6e6"/><path d="M1857.1 11.700000000000001L1858.4 7.100000000000001H1860.6L1861.9 11.700000000000001Z" transform="rotate(157.5 1859.5 17.3)" fill="#e6e6e6"/><path d="M1857.1 11.700000000000001L1858.4 7.100000000000001H1860.6L1861.9 11.700000000000001Z" transform="rotate(202.5 1859.5 17.3)" fill="#e6e6e6"/><path d="M1857.1 11.700000000000001L1858.4 7.100000000000001H1860.6L1861.9 11.700000000000001Z" transform="rotate(247.5 1859.5 17.3)" fill="#e6e6e6"/><path d="M1857.1 11.700000000000001L1858.4 7.100000000000001H1860.6L1861.9 11.700000000000001Z" transform="rotate(292.5 1859.5 17.3)" fill="#e6e6e6"/><path d="M1857.1 11.700000000000001L1858.4 7.100000000000001H1860.6L1861.9 11.700000000000001Z" transform="rotate(337.5 1859.5 17.3)" fill="#e6e6e6"/>
<circle cx="1859.5" cy="17.3" r="5.5" fill="none" stroke="#e6e6e6" stroke-width="2.4"/>
<circle cx="1859.5" cy="17.3" r="4.3" fill="#050505"/>
<circle cx="1859.5" cy="17.3" r="2" fill="#d0d0d0"/>
<rect x="0" y="1" width="1904" height="1" fill="#3e3e3e"/><rect x="0" y="0" width="1904" height="1" fill="#000"/><rect x="0" y="0" width="240" height="1" fill="#fff"/><rect x="0" y="2" width="1.2" height="30" fill="#484848"/>
</svg></body></html>
